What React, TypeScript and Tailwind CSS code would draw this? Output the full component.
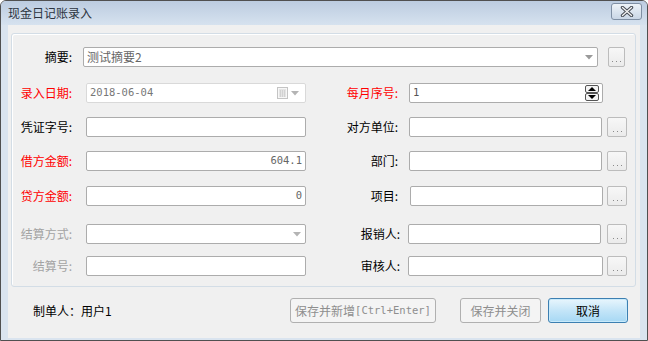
import React from 'react'

const mono = "font-['DejaVu_Sans_Mono','Liberation_Mono',monospace]"

function Arrow({ light }: { light?: boolean }) {
  return (
    <svg width="8" height="5" viewBox="0 0 8 5" className="shrink-0">
      <path d="M0 0h8L4 4.5z" fill={light ? '#b4b4b4' : '#9a9a9a'} />
    </svg>
  )
}

function Dots({ wide }: { wide?: boolean }) {
  return (
    <div
      className={`${wide ? 'w-[20px]' : 'w-[17px]'} h-[20px] shrink-0 rounded-[2px] border border-[#bcbcbc] bg-gradient-to-b from-[#f7f7f7] to-[#ebebeb] flex items-end justify-center pb-[4px] gap-[3px]`}
    >
      <span className="h-px w-px bg-[#8a8a8a]" />
      <span className="h-px w-px bg-[#8a8a8a]" />
      <span className="h-px w-px bg-[#8a8a8a]" />
    </div>
  )
}

function Input({
  w,
  children,
  right,
  border = 'border-[#acacac]',
}: {
  w: string
  children?: React.ReactNode
  right?: boolean
  border?: string
}) {
  return (
    <div
      className={`${w} h-[20px] shrink-0 border ${border} rounded-[2px] bg-white flex items-center ${right ? 'justify-end pr-[3px]' : 'pl-[3px] pr-[4px]'} text-[#666]`}
    >
      {children}
    </div>
  )
}

function Label({ text, color = 'text-black', w }: { text: string; color?: string; w: string }) {
  return <div className={`${w} shrink-0 text-right leading-none ${color}`}>{text}</div>
}

export default function App() {
  return (
    <div className="w-[648px] h-[341px] border border-[#505050] rounded-t-[6px] overflow-hidden bg-[#dae4ef] flex flex-col text-[12px] font-['Noto_Sans_CJK_SC','Noto_Sans',sans-serif]">
      {/* title bar */}
      <div className="h-[24px] shrink-0 flex items-center justify-between pl-[7px] pr-[5px] bg-gradient-to-b from-[#bccce0] to-[#d6e2ef]">
        <span className="text-[#2c3440] text-[12px] leading-none">现金日记账录入</span>
        <div className="w-[31px] h-[17px] mt-[-3px] rounded-[3px] border border-[#7f8fa3] bg-gradient-to-b from-[#eef3f8] to-[#c9d6e5] flex items-center justify-center">
          <svg width="14" height="11" viewBox="0 0 14 11">
            <path d="M2.5 1.5l9 8M11.5 1.5l-9 8" stroke="#4a4f57" strokeWidth="3.4" strokeLinecap="round" />
            <path d="M2.5 1.5l9 8M11.5 1.5l-9 8" stroke="#f4f4f4" strokeWidth="1.3" strokeLinecap="round" />
          </svg>
        </div>
      </div>

      {/* body */}
      <div className="flex-1 mx-[7px] mb-[2px] bg-[#f0f0f0] pt-[8px] flex flex-col">
        <div className="ml-[3px] w-[625px] h-[254px] shrink-0 rounded-[3px] border border-[#d3dde6] shadow-[inset_1px_1px_0_#fff] flex flex-col">
          {/* 摘要 */}
          <div className="mt-[13px] h-[20px] flex items-center">
            <Label w="w-[60px]" text="摘要:" />
            <div className="ml-[11px] w-[515px] h-[20px] border border-[#acacac] rounded-[2px] bg-white flex items-center justify-between pl-[3px] pr-[4px] text-[#666]">
              <span>测试摘要2</span>
              <Arrow />
            </div>
            <div className="ml-[10px]">
              <Dots />
            </div>
          </div>

          {/* 录入日期 / 每月序号 */}
          <div className="mt-[16px] h-[20px] flex items-center">
            <Label w="w-[60px]" text="录入日期:" color="text-[#ff0000]" />
            <div className="ml-[14px] w-[220px] h-[20px] border border-[#d9d9d9] rounded-[2px] bg-white flex items-center justify-between pl-[3px] pr-[6px]">
              <span className={`${mono} text-[10.5px] text-[#777]`}>2018-06-04</span>
              <div className="flex items-center gap-[3px]">
                <svg width="11" height="12" viewBox="0 0 11 12">
                  <rect x="0.5" y="0.5" width="10" height="11" fill="#f7f7f7" stroke="#c4c4c4" />
                  <path d="M2 3h7M2 5h7M2 7h7M2 9h7M3.5 3v7M5.5 3v7M7.5 3v7" stroke="#d2d2d2" strokeWidth="1" />
                </svg>
                <Arrow light />
              </div>
            </div>
            <Label w="w-[92px]" text="每月序号:" color="text-[#ff0000]" />
            <div className="ml-[11px] w-[194px] h-[20px] border border-[#acacac] rounded-[2px] bg-white flex items-center justify-between pl-[3px] pr-[3px]">
              <span className={`${mono} text-[10.5px] text-[#555]`}>1</span>
              <svg width="14" height="16" viewBox="0 0 14 16">
                <rect x="0.5" y="0.5" width="13" height="7" rx="1.5" fill="#f4f4f4" stroke="#555" />
                <rect x="0.5" y="8.5" width="13" height="7" rx="1.5" fill="#f4f4f4" stroke="#555" />
                <path d="M3 6h8L7 2z" fill="#000" />
                <path d="M3 10h8L7 14z" fill="#000" />
              </svg>
            </div>
          </div>

          {/* 凭证字号 / 对方单位 */}
          <div className="mt-[14px] h-[20px] flex items-center">
            <Label w="w-[60px]" text="凭证字号:" />
            <div className="ml-[14px]">
              <Input w="w-[220px]" />
            </div>
            <Label w="w-[92px]" text="对方单位:" />
            <div className="ml-[11px]">
              <Input w="w-[193px]" />
            </div>
            <div className="ml-[5px]">
              <Dots wide />
            </div>
          </div>

          {/* 借方金额 / 部门 */}
          <div className="mt-[14px] h-[20px] flex items-center">
            <Label w="w-[60px]" text="借方金额:" color="text-[#ff0000]" />
            <div className="ml-[14px]">
              <Input w="w-[220px]" right>
                <span className={`${mono} text-[10.5px] text-[#666]`}>604.1</span>
              </Input>
            </div>
            <Label w="w-[92px]" text="部门:" />
            <div className="ml-[11px]">
              <Input w="w-[193px]" />
            </div>
            <div className="ml-[5px]">
              <Dots wide />
            </div>
          </div>

          {/* 贷方金额 / 项目 */}
          <div className="mt-[15px] h-[20px] flex items-center">
            <Label w="w-[60px]" text="贷方金额:" color="text-[#ff0000]" />
            <div className="ml-[14px]">
              <Input w="w-[220px]" right>
                <span className={`${mono} text-[10.5px] text-[#666]`}>0</span>
              </Input>
            </div>
            <Label w="w-[92px]" text="项目:" />
            <div className="ml-[12px]">
              <Input w="w-[193px]" />
            </div>
            <div className="ml-[4px]">
              <Dots wide />
            </div>
          </div>

          {/* 结算方式 / 报销人 */}
          <div className="mt-[18px] h-[20px] flex items-center">
            <Label w="w-[60px]" text="结算方式:" color="text-[#a3a3a3]" />
            <div className="ml-[14px] w-[220px] h-[20px] border border-[#acacac] rounded-[2px] bg-white flex items-center justify-end pr-[4px]">
              <Arrow light />
            </div>
            <Label w="w-[94px]" text="报销人:" />
            <div className="ml-[8px]">
              <Input w="w-[193px]" />
            </div>
            <div className="ml-[6px]">
              <Dots wide />
            </div>
          </div>

          {/* 结算号 / 审核人 */}
          <div className="mt-[12px] h-[20px] flex items-center">
            <Label w="w-[60px]" text="结算号:" color="text-[#a3a3a3]" />
            <div className="ml-[14px]">
              <Input w="w-[220px]" />
            </div>
            <Label w="w-[94px]" text="审核人:" />
            <div className="ml-[8px]">
              <Input w="w-[195px]" />
            </div>
            <div className="ml-[4px]">
              <Dots wide />
            </div>
          </div>
        </div>

        {/* footer */}
        <div className="mt-[11px] h-[25px] flex items-center pr-[12px]">
          <span className="pl-[25px] text-black leading-none">制单人：用户1</span>
          <div className="flex-1" />
          <div className="w-[146px] h-[25px] rounded-[3px] border border-[#b0b0b0] bg-[#f4f4f4] flex items-center justify-center text-[#8e8e8e]">
            保存并新增<span className={`${mono} text-[10.5px]`}>[Ctrl+Enter]</span>
          </div>
          <div className="ml-[24px] w-[81px] h-[25px] rounded-[3px] border border-[#b0b0b0] bg-[#f4f4f4] flex items-center justify-center text-[#8e8e8e]">
            保存并关闭
          </div>
          <div className="ml-[7px] w-[80px] h-[25px] rounded-[3px] border border-[#3c7fb1] bg-gradient-to-b from-[#e8f6fd] via-[#c4e5f8] to-[#a6d8f4] shadow-[inset_0_0_0_1px_#c8eafb] flex items-center justify-center text-black">
            取消
          </div>
        </div>
      </div>
    </div>
  )
}
